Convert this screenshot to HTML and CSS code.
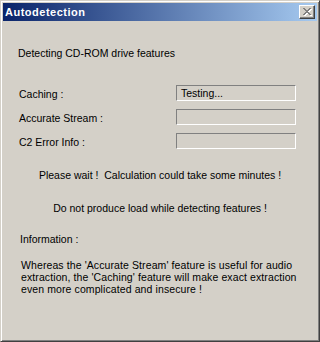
FILE: index.html
```html
<!DOCTYPE html>
<html lang="en">
<head>
    <meta charset="UTF-8">
    <meta name="viewport" content="width=device-width, initial-scale=1.0">
    <title>Autodetection</title>
    <link rel="stylesheet" href="styles.css">
</head>
<body>
    <div class="window">
        <div class="titlebar">
            <span class="title">Autodetection</span>
            <span class="close">
                <svg width="10" height="8" viewBox="0 0 10 8" shape-rendering="crispEdges">
                    <g fill="#ffffff" transform="translate(1,1)">
                        <rect x="0" y="0" width="2" height="1"/><rect x="6" y="0" width="2" height="1"/>
                        <rect x="1" y="1" width="2" height="1"/><rect x="5" y="1" width="2" height="1"/>
                        <rect x="2" y="2" width="4" height="1"/>
                        <rect x="3" y="3" width="2" height="1"/>
                        <rect x="2" y="4" width="4" height="1"/>
                        <rect x="1" y="5" width="2" height="1"/><rect x="5" y="5" width="2" height="1"/>
                        <rect x="0" y="6" width="2" height="1"/><rect x="6" y="6" width="2" height="1"/>
                    </g>
                    <g fill="#808080">
                        <rect x="0" y="0" width="2" height="1"/><rect x="6" y="0" width="2" height="1"/>
                        <rect x="1" y="1" width="2" height="1"/><rect x="5" y="1" width="2" height="1"/>
                        <rect x="2" y="2" width="4" height="1"/>
                        <rect x="3" y="3" width="2" height="1"/>
                        <rect x="2" y="4" width="4" height="1"/>
                        <rect x="1" y="5" width="2" height="1"/><rect x="5" y="5" width="2" height="1"/>
                        <rect x="0" y="6" width="2" height="1"/><rect x="6" y="6" width="2" height="1"/>
                    </g>
                </svg>
            </span>
        </div>

        <div class="content">
            <p class="intro">Detecting CD-ROM drive features</p>

            <div class="features">
                <div class="row">
                    <span class="label">Caching :</span>
                    <span class="field">Testing...</span>
                </div>
                <div class="row">
                    <span class="label">Accurate Stream :</span>
                    <span class="field"></span>
                </div>
                <div class="row">
                    <span class="label">C2 Error Info :</span>
                    <span class="field"></span>
                </div>
            </div>

            <p class="notice wait">Please wait !&nbsp; Calculation could take some minutes !</p>
            <p class="notice load">Do not produce load while detecting features !</p>

            <p class="info-title">Information :</p>
            <p class="info">Whereas the 'Accurate Stream' feature is useful for audio<br>extraction, the 'Caching' feature will make exact extraction<br>even more complicated and insecure !</p>
        </div>
    </div>
</body>
</html>
```

FILE: styles.css
```css
body {
    margin: 0;
    font-family: "Liberation Sans", Arial, sans-serif;
    font-size: 10.5px;
    line-height: 13px;
    color: #000;
}

p {
    margin: 0;
}

.window {
    box-sizing: border-box;
    width: 320px;
    height: 342px;
    background: #d4d0c8;
    border: 1px solid;
    border-color: #d4d0c8 #404040 #404040 #d4d0c8;
    box-shadow: inset 1px 1px 0 #fff, inset -1px -1px 0 #808080;
    padding: 2px;
}

.titlebar {
    height: 18px;
    display: flex;
    align-items: center;
    justify-content: space-between;
    padding: 0 2px 0 2px;
    background: linear-gradient(to right, #0a246a, #a6caf0);
}

.title {
    color: #fff;
    font-weight: bold;
    font-size: 11px;
    letter-spacing: 0.5px;
}

.close {
    box-sizing: border-box;
    width: 16px;
    height: 14px;
    background: #d4d0c8;
    border: 1px solid;
    border-color: #fff #404040 #404040 #fff;
    box-shadow: inset -1px -1px 0 #808080;
    display: flex;
    padding: 2px 0 0 3px;
}

.close svg {
    display: block;
}

.content {
    padding: 0 15px;
}

.intro {
    margin-top: 26px;
}

.features {
    margin-top: 25px;
    display: flex;
    flex-direction: column;
    gap: 8px;
    padding-right: 6px;
}

.row {
    display: flex;
    align-items: center;
    justify-content: space-between;
}

.label {
    padding-top: 2px;
    padding-left: 1px;
}

.field {
    box-sizing: border-box;
    width: 120px;
    height: 16px;
    border: 1px solid;
    border-color: #808080 #fff #fff #808080;
    padding: 1px 4px 0;
}

.notice {
    text-align: center;
}

.wait {
    margin-top: 20px;
}

.load {
    margin-top: 20px;
}

.info-title {
    margin-top: 18px;
    padding-left: 2px;
}

.info {
    margin-top: 13px;
    padding-left: 3px;
    line-height: 12px;
    white-space: nowrap;
    letter-spacing: 0.1px;
}
```
